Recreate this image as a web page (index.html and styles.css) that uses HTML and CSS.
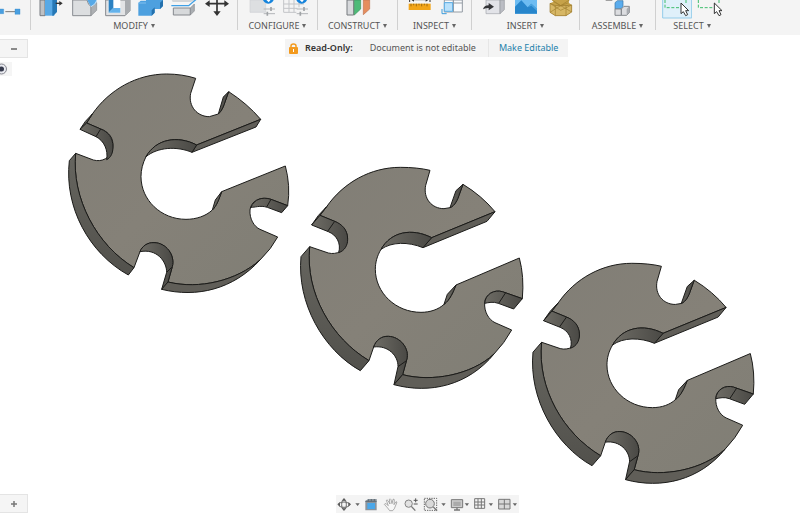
FILE: index.html
```html
<!DOCTYPE html>
<html lang="en">
<head>
<meta charset="utf-8">
<title>Design workspace</title>
<link rel="stylesheet" href="styles.css">
</head>
<body>
<header class="toolbar">
  <section class="group">
    <div class="icons">
      <button class="tool" aria-label="Sketch dimension"><svg width="31" height="18" viewBox="0 0 93 54"><path d="M16 35H46" stroke="#777" stroke-width="3"/><path d="M-6 27H11V41H-6ZM45 27H60V43H45Z" fill="#4a9fe0" stroke="#2f86c8" stroke-width="1"/></svg></button>
    </div>
  </section>
  <section class="group">
    <div class="icons">
      <button class="tool" aria-label="Press pull"><svg width="33" height="18" viewBox="107 0 99 54"><path d="M122 0H137V47H122Z" fill="#bfc1c4" stroke="#777b80" stroke-width="3"/><path d="M137 0H165V47H137Z" fill="#58a9e6"/><path d="M159 0H173V36L162 47H159Z" fill="#2678b6"/><path d="M169 10H182" stroke="#333" stroke-width="4"/><path d="M180 3L190 10L180 17Z" fill="#333"/></svg></button>
      <button class="tool" aria-label="Fillet"><svg width="33" height="18" viewBox="206 0 99 54"><path d="M220 0H263Q266 14 275 20V47H220Z" fill="#dcdee0" stroke="#898c91" stroke-width="3"/><path d="M275 20L292 8V31L275 47Z" fill="#adb0b3" stroke="#8b8e92" stroke-width="2"/><path d="M264 0H293Q292 14 275 20Q268 10 264 0Z" fill="#56a9e7"/><path d="M275 20Q289 14 293 0" fill="none" stroke="#fff" stroke-width="2"/></svg></button>
      <button class="tool" aria-label="Shell"><svg width="33" height="18" viewBox="305 0 99 54"><path d="M319 0H392V32L377 47H319Z" fill="#e2e3e5" stroke="#85898e" stroke-width="3"/><path d="M377 0H392V32L377 47Z" fill="#a8abaf"/><path d="M328 0H363V38H328Z" fill="#fff"/><path d="M328 0H342V24L328 38Z" fill="#2c82c2"/><path d="M342 24H363V38H328Z" fill="#63b2eb"/></svg></button>
      <button class="tool" aria-label="Combine"><svg width="33" height="18" viewBox="404 0 99 54"><path d="M417 9L424 2H440V0H491V18L482 27H466V38L457 47H417Z" fill="#4da0df"/><path d="M457 47V31L466 22V38ZM482 27V8L491 0V18Z" fill="#2471ad"/><path d="M417 9H440" stroke="#81c0f0" stroke-width="3"/></svg></button>
      <button class="tool" aria-label="Split body"><svg width="33" height="18" viewBox="503 0 99 54"><path d="M517 0H588L574 6H520Z" fill="#d3d5d7"/><path d="M516 17H568L594 -5" fill="none" stroke="#3fa0e6" stroke-width="4"/><path d="M522 24H573V45H522Z" fill="#d7d9db" stroke="#85888d" stroke-width="3"/><path d="M573 24L585 12V33L573 45Z" fill="#aaaeb2" stroke="#85888d" stroke-width="2"/></svg></button>
      <button class="tool" aria-label="Move"><svg width="33" height="18" viewBox="602 0 99 54"><path d="M628 11H678M653 0V38" stroke="#333" stroke-width="5"/><path d="M617 11L631 1V21ZM689 11L675 1V21ZM653 48L642 34H664Z" fill="#333"/></svg></button>
    </div>
    <button class="label">MODIFY<span class="caret"></span></button>
  </section>
  <section class="group">
    <div class="icons">
      <button class="tool" aria-label="Configure model"><svg width="33" height="18" viewBox="13 0 99 54"><path d="M28 0H75V37H28Z" fill="#dddfe1" stroke="#d0d2d4" stroke-width="2"/><circle cx="83" cy="-6" r="17" fill="#1684dc"/><path d="M78 -2L84 4L90 -4" fill="none" stroke="#fff" stroke-width="4"/><path d="M69 27H103M69 41H103" stroke="#b2b5b8" stroke-width="3"/><path d="M91 21V33M80 35V47" stroke="#a0a3a6" stroke-width="5"/></svg></button>
      <button class="tool" aria-label="Configuration table"><svg width="33" height="18" viewBox="112 0 99 54"><path d="M129 0V37H167M129 12H190M129 25H170M145 0V37M160 0V37M175 0V22" fill="none" stroke="#c3c5c8" stroke-width="3"/><circle cx="183" cy="-6" r="17" fill="#1684dc"/><path d="M178 -2L184 4L190 -4" fill="none" stroke="#fff" stroke-width="4"/><path d="M168 27H202M168 41H202" stroke="#b2b5b8" stroke-width="3"/><path d="M190 21V33M179 35V47" stroke="#a0a3a6" stroke-width="5"/></svg></button>
    </div>
    <button class="label">CONFIGURE<span class="caret"></span></button>
  </section>
  <section class="group">
    <div class="icons">
      <button class="tool" aria-label="Offset plane"><svg width="33" height="18" viewBox="303 0 99 54"><path d="M321 0H341V45H321Z" fill="#d7d9dc" stroke="#777a7e" stroke-width="3"/><path d="M343 0H362V27L343 45Z" fill="#4dbb78" stroke="#38935c" stroke-width="2"/><path d="M370 0H389V27L370 44Z" fill="#e58d5d" stroke="#bf7350" stroke-width="2"/></svg></button>
    </div>
    <button class="label">CONSTRUCT<span class="caret"></span></button>
  </section>
  <section class="group">
    <div class="icons">
      <button class="tool" aria-label="Measure"><svg width="33" height="18" viewBox="484 0 99 54"><path d="M507 0V6M568 0V6M514 -1H561" stroke="#333" stroke-width="3"/><path d="M511 -1L520 -7V5ZM564 -1L555 -7V5Z" fill="#333"/><path d="M504 11H570V30H504Z" fill="#f2a519"/><path d="M511 11V19M519 11V16M527 11V19M535 11V16M543 11V19M551 11V16M559 11V19" stroke="#79500c" stroke-width="2"/></svg></button>
      <button class="tool" aria-label="Section analysis"><svg width="33" height="18" viewBox="583 0 99 54"><path d="M611 0H638V36H611ZM638 0H665V36H638ZM611 9H665" fill="#fafbfc" stroke="#939ba3" stroke-width="3"/><path d="M611 8H636V34H611Z" fill="#b9e1fb" stroke="#58ace5" stroke-width="3"/><path d="M604 27V41H618" fill="none" stroke="#3b9cdb" stroke-width="3"/></svg></button>
    </div>
    <button class="label">INSPECT<span class="caret"></span></button>
  </section>
  <section class="group">
    <div class="icons">
      <button class="tool" aria-label="Insert derive"><svg width="33" height="18" viewBox="48 0 99 54"><path d="M78 0H120V41H78Z" fill="#e2e3e8" stroke="#a1a3aa" stroke-width="2"/><path d="M120 0H133V29L120 41Z" fill="#bbbdc4" stroke="#96999f" stroke-width="2"/><path d="M69 28Q72 16 86 16V9L102 20L86 31V24Q77 24 69 28Z" fill="#343538"/></svg></button>
      <button class="tool" aria-label="Insert canvas"><svg width="33" height="18" viewBox="147 0 99 54"><path d="M165 0H231V41H165Z" fill="#6dbcf2"/><path d="M165 20L184 1L203 22L214 11L231 27V41H165Z" fill="#2786cc"/><path d="M203 22L214 11L231 27V33L214 17Z" fill="#4ba4e0"/></svg></button>
      <button class="tool" aria-label="Insert mesh"><svg width="33" height="18" viewBox="246 0 99 54"><path d="M270 10L281 5L276 0H328L326 8L335 15V36L318 47H286L270 37Z" fill="#c6a249"/><path d="M270 10L286 17H318L335 15V36L318 47H286L270 37Z" fill="#d7b765" stroke="#97752b" stroke-width="2"/><path d="M270 10L302 31L335 15M270 37L302 17L335 36M286 17V47M318 17V47M281 5L302 17L326 8M276 0L302 17L328 0" fill="none" stroke="#a1812f" stroke-width="2"/></svg></button>
    </div>
    <button class="label">INSERT<span class="caret"></span></button>
  </section>
  <section class="group">
    <div class="icons">
      <button class="tool" aria-label="New component"><svg width="33" height="18" viewBox="423 0 99 54"><path d="M437 0H457" stroke="#777" stroke-width="4"/><path d="M465 8L472 2H489V20L482 27H465Z" fill="#5aaced" stroke="#3674a3" stroke-width="2"/><path d="M465 27H484V46H465ZM484 27L492 19H508V38L500 46H484Z" fill="#dcdde0" stroke="#85888c" stroke-width="3"/><path d="M500 46V27L508 19V38Z" fill="#a8abb0"/></svg></button>
    </div>
    <button class="label">ASSEMBLE<span class="caret"></span></button>
  </section>
  <section class="group">
    <div class="icons">
      <button class="tool" aria-label="Select"><svg width="33" height="19" viewBox="597 0 99 57"><path d="M608 -3H695V54H608Z" fill="#dff0fa" stroke="#94cdea" stroke-width="3"/><path d="M615 0V23H660M678 0V10" fill="none" stroke="#3fbd6d" stroke-width="3" stroke-dasharray="9 5"/><path d="M663 9V41L670 35L677 47L683 44L677 32H686Z" fill="#fff" stroke="#333" stroke-width="3"/></svg></button>
      <button class="tool" aria-label="Window selection"><svg width="33" height="19" viewBox="696 0 99 57"><path d="M715 0V23H760M777 0V10" fill="none" stroke="#3fbd6d" stroke-width="3" stroke-dasharray="9 5"/><path d="M763 9V41L770 35L777 47L783 44L777 32H786Z" fill="#fff" stroke="#333" stroke-width="3"/></svg></button>
    </div>
    <button class="label">SELECT<span class="caret"></span></button>
  </section>
</header>
<main class="canvas">
  <svg class="model" viewBox="0 35 800 482" role="img" aria-label="Three slotted discs">
    <defs>
      <linearGradient id="face" x1="0" y1="0" x2="1" y2="1"><stop offset="0" stop-color="#817e76"/><stop offset=".5" stop-color="#858178"/><stop offset="1" stop-color="#807e75"/></linearGradient>
      <linearGradient id="side" x1="0" y1="0" x2="0" y2="1"><stop offset="0" stop-color="#66655f"/><stop offset="1" stop-color="#52514c"/></linearGradient>
      <linearGradient id="bore" x1="0" y1="0" x2="1" y2="0"><stop offset="0" stop-color="#6e6c65"/><stop offset="1" stop-color="#4a4945"/></linearGradient>
      <g id="disc">
        <path class="face" d="M75 166L95 140C145 68 227 22 316 22C350 22 380 25 405 31L392 76C384 115 410 146 447 146L465 143C480 137 488 118 492 106L504 73Q560 107 600 155L410 233C350 203 288 215 258 268C246 288 241 308 241 328C241 398 302 457 378 457C406 457 431 448 447 433C465 420 475 395 483 375L673 294Q688 350 682 416L622 395C598 388 571 402 569 428C567 455 581 479 600 488L650 510Q628 550 597 582C530 645 410 667 323 644L335 600C345 565 315 530 280 529C260 528 243 540 236 561L222 602C110 535 30 400 44 260L100 279C125 285 150 273 157 245C162 215 142 194 119 184Z"/>
        <path class="side" d="M50 195Q68 165 95 140L75 166Z"/>
        <path class="bore" d="M75 166L50 195L100 215C125 225 139 250 131 278C150 272 158 255 158 238C158 208 140 192 119 184Z"/>
        <path class="line" d="M119 184L98 214"/>
        <path class="side" d="M44 260L18 290C5 430 85 570 196 632L222 602C110 535 30 400 44 260Z"/>
        <path class="bore" d="M236 561C243 540 260 528 280 529C315 530 345 565 335 600L323 644L297 674L309 620C310 588 280 555 236 561Z"/>
        <path class="line" d="M309 620L333 603"/>
        <path class="edge" d="M323 644C410 667 530 645 597 582C520 676 405 703 297 674Z"/>
        <path class="bore" d="M682 416L656 447L610 430C595 424 580 428 569 430C571 402 598 388 622 395Z"/>
        <path class="line" d="M632 398L611 430"/>
        <path class="edge" d="M600 155L576 184L384 263L410 233Z"/>
        <path class="bore" d="M410 233L384 263C340 245 290 245 258 268C288 215 350 203 410 233Z"/>
        <path class="bore" d="M504 73L483 92L465 143C480 137 488 118 492 106ZM483 375L457 403L447 433C465 420 475 395 483 375Z"/>
      </g>
    </defs>
    <g transform="translate(60 65) scale(.33333)">
      <path class="face" d="M80 174L97 147C148 74 230 27 320 27C351 27 382 32 407 40L392 85C384 124 412 155 448 155L475 147C486 138 492 120 495 111L506 80Q562 116 602 163L410 240C352 210 288 222 258 275C248 295 243 315 243 335C243 405 303 463 378 463C409 463 438 453 457 435C470 423 478 400 485 380L676 303Q692 362 683 422L633 403C600 393 572 409 570 435C568 461 582 485 600 493L653 516Q634 552 600 585C530 647 418 674 324 651L337 605C346 570 318 533 282 533C262 532 246 544 240 560L222 608C110 540 34 400 47 265L100 285C125 292 152 280 158 250C163 220 146 200 122 192Z"/>
      <path class="side" d="M60 193Q74 168 97 147L80 174Z"/>
      <path class="bore" d="M80 174L60 193L108 215C132 227 145 255 140 284C153 278 159 263 159 246C159 217 143 200 122 192Z"/>
      <path class="line" d="M122 192L108 215"/>
      <path class="side" d="M47 265L28 287C12 428 88 565 205 630L222 608C110 540 34 400 47 265Z"/>
      <path class="bore" d="M240 560C246 544 262 532 282 533C318 533 346 570 337 605L324 651L305 673L320 622C320 589 290 550 240 560Z"/>
      <path class="line" d="M320 622L335 607"/>
      <path class="edge" d="M324 651C418 674 530 647 600 585C520 673 410 699 305 673Z"/>
      <path class="bore" d="M683 422L665 443L622 427C600 420 583 428 573 427C582 403 608 394 633 403Z"/>
      <path class="line" d="M633 403L620 426"/>
      <path class="edge" d="M602 163L588 186L396 262L410 240Z"/>
      <path class="bore" d="M410 240L396 262C350 243 294 246 258 275C288 222 352 210 410 240Z"/>
      <path class="bore" d="M506 80L490 96L475 147C486 138 492 120 495 111ZM485 380L466 405L457 435C470 423 478 400 485 380Z"/>
    </g>
    <use href="#disc" transform="translate(295 160) scale(.33333)"/>
    <use href="#disc" transform="translate(527 256) scale(.33183)"/>
  </svg>
  <aside class="banner">
    <svg class="lock" width="9" height="11" viewBox="0 0 18 22"><path d="M4 10V6Q4 2 9 2T14 6V10" fill="none" stroke="#f39a1e" stroke-width="3"/><rect y="8" width="18" height="14" rx="2" fill="#f39a1e"/><path d="M9 12V18" stroke="#fff" stroke-width="2"/></svg>
    <strong class="state">Read-Only:</strong>
    <span class="message">Document is not editable</span>
    <a class="action" href="#">Make Editable</a>
  </aside>
  <button class="panel panel-top" aria-label="Collapse browser"><svg width="8" height="8" viewBox="0 0 16 16"><path d="M2 8H14" stroke="#666" stroke-width="3"/></svg></button>
  <button class="visibility" aria-label="Visibility"><svg width="12" height="14" viewBox="0 0 24 28"><circle cx="3" cy="14" r="10" fill="#e9eaf0" stroke="#85878f" stroke-width="2"/><circle cx="3" cy="14" r="5" fill="#363a4c"/></svg></button>
  <button class="panel panel-bottom" aria-label="Expand comments"><svg width="8" height="8" viewBox="0 0 16 16"><path d="M2 8H14M8 2V14" stroke="#777" stroke-width="3"/></svg></button>
  <nav class="viewbar" aria-label="View controls">
    <button class="tool" aria-label="Orbit"><svg width="25" height="18" viewBox="33 28 75 54"><path d="M57 37L64 45H50ZM57 76L50 68H64ZM37 56L45 49V63ZM78 56L70 49V63Z" fill="#555"/><ellipse cx="57" cy="57" rx="16" ry="8" fill="none" stroke="#666" stroke-width="3"/><ellipse cx="57" cy="57" rx="7" ry="14" fill="none" stroke="#666" stroke-width="3"/><path d="M91 53H104L98 61Z" fill="#666"/></svg></button>
    <button class="tool" aria-label="Look at"><svg width="20" height="18" viewBox="108 28 60 54"><path d="M121 46L130 40H155V74H121Z" fill="#8a949d"/><path d="M127 52H150V70H127Z" fill="#4aa7e9"/><path d="M121 47H155M130 41V47M139 40V47M148 40V47" stroke="#606a73" stroke-width="3"/></svg></button>
    <button class="tool" aria-label="Pan"><svg width="20" height="18" viewBox="168 28 60 54"><path d="M188 67L178 56Q179 52 184 55L190 60L184 44Q186 41 189 45L195 55L193 41Q196 38 198 42L201 54L204 41Q208 39 208 43L207 57L213 48Q217 48 215 52L208 69L203 75H194Z" fill="#f7f7f7" stroke="#888" stroke-width="2"/></svg></button>
    <button class="tool" aria-label="Zoom"><svg width="20" height="18" viewBox="228 28 60 54"><circle cx="251" cy="54" r="11" fill="#e2e2e2" stroke="#858585" stroke-width="3"/><path d="M259 62L271 75" stroke="#777" stroke-width="4"/><path d="M272 38V50M266 44H278M266 55H278" stroke="#555" stroke-width="3"/></svg></button>
    <button class="tool" aria-label="Fit"><svg width="26" height="18" viewBox="288 28 78 54"><path d="M298 38H335V74H298Z" fill="none" stroke="#666" stroke-width="3" stroke-dasharray="4 3"/><circle cx="315" cy="54" r="13" fill="#d9d9d9" stroke="#777" stroke-width="3"/><path d="M325 64L336 75" stroke="#777" stroke-width="4"/><path d="M349 53H362L356 61Z" fill="#666"/></svg></button>
    <button class="tool" aria-label="Display settings"><svg width="23" height="18" viewBox="366 28 69 54"><path d="M379 42H413V66H379Z" fill="#ccc" stroke="#777" stroke-width="3"/><path d="M396 66V73M387 73H405" stroke="#777" stroke-width="4"/><path d="M385 48H407V61H385Z" fill="#aaa"/><path d="M419 53H432L426 61Z" fill="#666"/></svg></button>
    <button class="tool" aria-label="Grid and snaps"><svg width="24" height="18" viewBox="435 28 72 54"><path d="M449 39H479V68H449ZM459 39V68M469 39V68M449 49H479M449 58H479" fill="none" stroke="#777" stroke-width="3"/><path d="M491 53H504L498 61Z" fill="#666"/></svg></button>
    <button class="tool" aria-label="Viewports"><svg width="25" height="18" viewBox="507 28 75 54"><path d="M521 41H555V70H521ZM538 41V70M521 55H555" fill="#d9d9d9" stroke="#777" stroke-width="3"/><path d="M563 53H576L570 61Z" fill="#666"/></svg></button>
  </nav>
</main>
</body>
</html>
```
FILE: styles.css
```css
* { box-sizing: border-box; }

body {
  margin: 0;
  height: 100vh;
  display: flex;
  flex-direction: column;
  background: #fff;
  color: #555;
  font-family: "Noto Sans", "Open Sans", sans-serif;
  font-size: 9px;
}

button {
  margin: 0;
  padding: 0;
  border: 0;
  background: none;
  color: inherit;
  font: inherit;
}

svg { display: block; }

.toolbar {
  display: grid;
  grid-template-columns: 31px 207px 80px 80px 74px 108px 76px 72px;
  background: #f4f4f4;
  padding-bottom: 5px;
  flex: none;
}

.group {
  height: 30px;
  border-right: 1px solid #d0d0d0;
}

.group:last-child { border-right: 0; }

.icons {
  display: flex;
  justify-content: center;
  height: 19px;
}

.tool { display: flex; }

.label {
  display: flex;
  align-items: center;
  justify-content: center;
  gap: 3px;
  width: 100%;
  height: 13px;
  line-height: 13px;
}

.caret {
  border: 2px solid transparent;
  border-top: 4px solid #666;
  border-bottom: 0;
}

.canvas {
  position: relative;
  flex: 1;
  min-height: 0;
}

.model {
  width: 100%;
  height: 100%;
}

.face, .side, .edge, .bore, .line {
  stroke: #1b1b19;
  stroke-width: 3;
  stroke-linejoin: round;
}

.face { fill: url(#face); }
.side { fill: url(#side); }
.edge { fill: #605e58; }
.bore { fill: url(#bore); }
.line { fill: none; }

.banner {
  position: absolute;
  top: 4px;
  left: 285px;
  display: flex;
  align-items: center;
  height: 18px;
  padding-left: 4px;
  background: #f4f4f4;
  line-height: 18px;
}

.state {
  margin-left: 7px;
  color: #333;
  font-weight: 600;
}

.message { margin: 0 12px 0 17px; }

.action {
  padding: 0 10px;
  border-left: 1px solid #e6e6e6;
  color: #2581ab;
  text-decoration: none;
}

.panel {
  position: absolute;
  left: 0;
  display: flex;
  align-items: center;
  justify-content: flex-end;
  width: 28px;
  height: 19px;
  padding-right: 9px;
  border: 1px solid #e4e4e4;
  border-left: 0;
  background: #f5f5f5;
}

.panel-top { top: 4px; }
.panel-bottom { bottom: 4px; }

.visibility {
  position: absolute;
  top: 27px;
  left: 0;
  background: #f5f5f5;
}

.viewbar {
  position: absolute;
  bottom: 4px;
  left: 336px;
  display: flex;
  background: #f4f4f4;
}
```
